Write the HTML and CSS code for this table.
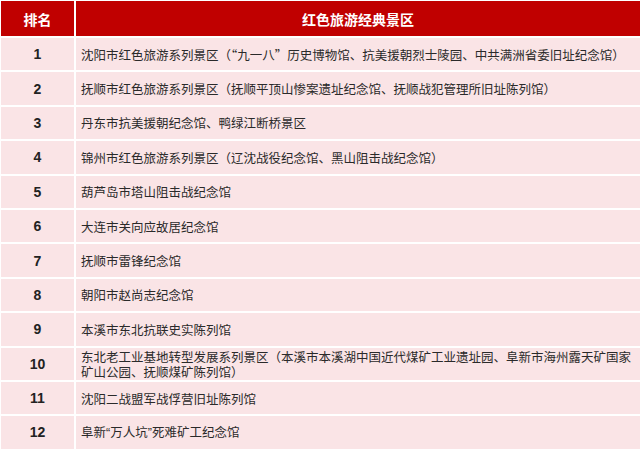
FILE: index.html
```html
<!DOCTYPE html>
<html lang="zh-CN">
<head>
<meta charset="utf-8">
<link rel="stylesheet" href="styles.css">
</head>
<body>
<table class="rank-table">
  <thead>
    <tr class="head-row">
      <th class="col-rank">排名</th>
      <th class="col-name">红色旅游经典景区</th>
    </tr>
  </thead>
  <tbody>
    <tr><td class="rank">1</td><td class="name">沈阳市红色旅游系列景区（“九一八”历史博物馆、抗美援朝烈士陵园、中共满洲省委旧址纪念馆）</td></tr>
    <tr><td class="rank">2</td><td class="name">抚顺市红色旅游系列景区（抚顺平顶山惨案遗址纪念馆、抚顺战犯管理所旧址陈列馆）</td></tr>
    <tr><td class="rank">3</td><td class="name">丹东市抗美援朝纪念馆、鸭绿江断桥景区</td></tr>
    <tr><td class="rank">4</td><td class="name">锦州市红色旅游系列景区（辽沈战役纪念馆、黑山阻击战纪念馆）</td></tr>
    <tr><td class="rank">5</td><td class="name">葫芦岛市塔山阻击战纪念馆</td></tr>
    <tr><td class="rank">6</td><td class="name">大连市关向应故居纪念馆</td></tr>
    <tr><td class="rank">7</td><td class="name">抚顺市雷锋纪念馆</td></tr>
    <tr><td class="rank">8</td><td class="name">朝阳市赵尚志纪念馆</td></tr>
    <tr><td class="rank">9</td><td class="name">本溪市东北抗联史实陈列馆</td></tr>
    <tr><td class="rank">10</td><td class="name">东北老工业基地转型发展系列景区（本溪市本溪湖中国近代煤矿工业遗址园、阜新市海州露天矿国家矿山公园、抚顺煤矿陈列馆）</td></tr>
    <tr><td class="rank">11</td><td class="name">沈阳二战盟军战俘营旧址陈列馆</td></tr>
    <tr><td class="rank">12</td><td class="name">阜新<span class="narrow-quote">“</span>万人坑<span class="narrow-quote">”</span>死难矿工纪念馆</td></tr>
  </tbody>
</table>
</body>
</html>
```
FILE: styles.css
```css
html, body {
  margin: 0;
  padding: 0;
  background: #ffffff;
  overflow: hidden;
}
.rank-table {
  margin: -1px 0 0 -1px;
  width: 643px;
  border-collapse: separate;
  border-spacing: 2px;
  table-layout: fixed;
  font-family: "Liberation Sans", "Noto Sans CJK SC", sans-serif;
  color: #222222;
}
.head-row th {
  background: #c00000;
  color: #ffffff;
  font-family: "Liberation Sans", "Noto Sans CJK SC", sans-serif;
  font-weight: bold;
  font-size: 14px;
  height: 35px;
  padding: 0;
  text-align: center;
}
.col-rank {
  width: 73px;
}
tbody td {
  background: #fae4e6;
  height: 32.4px;
  padding: 0;
}
.rank {
  text-align: center;
  font-weight: bold;
  font-size: 14px;
  font-family: "Liberation Sans", sans-serif;
  color: #222222;
}
.name {
  padding: 0 4px 0 5px;
  font-family: "Noto Sans CJK SC", sans-serif;
  font-size: 12.5px;
  line-height: 15px;
  text-align: left;
  color: #2a2a2a;
}
.narrow-quote {
  font-family: "Liberation Sans", sans-serif;
}
```
